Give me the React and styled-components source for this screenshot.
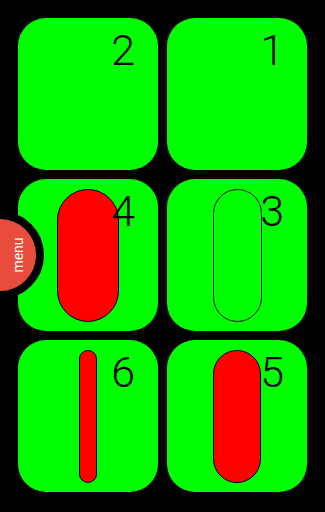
//-----------------IMPORTS---------------
import React from "react";
import styled, { createGlobalStyle } from "styled-components";
//---------------END_IMPORTS---------------

//------------STYLED_COMPONENTS------------
const GlobalStyle = createGlobalStyle`
  html, body {
    margin: 0;
    padding: 0;
    background: #000;
    font-family: Roboto, "Liberation Sans", sans-serif;
  }
  #root {
    min-height: 512px;
  }
`;

const Screen = styled.div`
  position: relative;
  width: 325px;
  height: 512px;
  overflow: hidden;
  background: #000;
`;

const Grid = styled.div`
  display: grid;
  grid-template-columns: 140px 140px;
  grid-auto-rows: 152px;
  column-gap: 9px;
  row-gap: 9px;
  padding: 18px 18px 20px 18px;
`;

const Card = styled.div`
  position: relative;
  display: flex;
  align-items: center;
  justify-content: center;
  background: #00ff00;
  border-radius: 28px;
`;

const Pill = styled.div`
  box-sizing: border-box;
  width: ${(p) => p.$w}px;
  height: 133px;
  border: 1px solid #000;
  border-radius: 999px;
  background: ${(p) => (p.$filled ? "#ff0000" : "transparent")};
`;

const Num = styled.span`
  position: absolute;
  top: 11px;
  right: 23px;
  font-size: 43px;
  font-weight: 300;
  line-height: 1;
  color: #000;
`;

const MenuButton = styled.div`
  position: absolute;
  left: -44px;
  top: 211px;
  width: 88px;
  height: 88px;
  box-sizing: border-box;
  border: 8px solid #000;
  border-radius: 50%;
  background: #e74c3c;
`;

const MenuLabel = styled.span`
  position: absolute;
  left: 53.5px;
  top: 36px;
  transform: translate(-50%, -50%) rotate(-90deg);
  color: #fff;
  font-size: 14px;
  line-height: 1;
  white-space: nowrap;
`;
//----------END_STYLED_COMPONENTS----------

const cards = [
  { n: 2 },
  { n: 1 },
  { n: 4, pill: 62, filled: true },
  { n: 3, pill: 49, filled: false },
  { n: 6, pill: 18, filled: true },
  { n: 5, pill: 48, filled: true },
];

//-----------------COMPONENT---------------
const App = () => {
  return (
    <>
      <GlobalStyle />
      <Screen>
        <Grid>
          {cards.map((c) => (
            <Card key={c.n}>
              {c.pill && <Pill $w={c.pill} $filled={c.filled} />}
              <Num>{c.n}</Num>
            </Card>
          ))}
        </Grid>
        <MenuButton>
          <MenuLabel>menu</MenuLabel>
        </MenuButton>
      </Screen>
    </>
  );
};
//---------------END_COMPONENT---------------

export default App;
